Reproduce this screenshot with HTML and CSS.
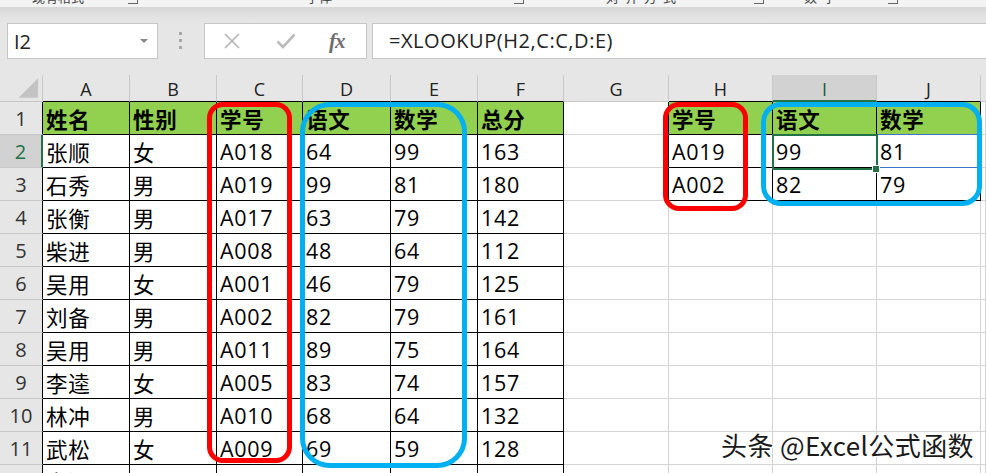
FILE: index.html
```html
<!DOCTYPE html>
<html lang="zh-CN">
<head>
<meta charset="utf-8">
<title>XLOOKUP</title>
<link rel="stylesheet" href="styles.css">
</head>
<body>
<div class="app">
  <div class="ribbon">
    <span class="rt t1">现有格式</span>
    <span class="lnch l1"></span>
    <span class="rt t2">字体</span>
    <span class="lnch l2"></span>
    <span class="rt t3">对齐方式</span>
    <span class="lnch l3"></span>
    <span class="rt t4">数字</span>
    <span class="lnch l4"></span>
  </div>
  <div class="fbar">
    <div class="namebox"><span class="ref">I2</span><span class="dd"></span></div>
    <div class="dots"><i></i><i></i><i></i></div>
    <div class="btns">
      <svg class="ico cancel" width="18" height="18" viewBox="0 0 18 18"><path d="M2 2 L16 16 M16 2 L2 16" stroke="#b4b4b4" stroke-width="1.6" fill="none"/></svg>
      <svg class="ico ok" width="20" height="18" viewBox="0 0 20 18"><path d="M1.5 9.5 L7 15 L18.5 2.5" stroke="#bcbcbc" stroke-width="2.6" fill="none"/></svg>
      <span class="fx">fx</span>
    </div>
    <div class="finput">=XLOOKUP(H2,C:C,D:E)</div>
  </div>
  <div class="sheet">
    <!-- column headers -->
    <div class="corner"><svg width="43" height="27" viewBox="0 0 43 27"><path d="M39 3 L39 23 L19 23 Z" fill="#c3c3c3"/></svg></div>
    <div class="ch bb">A</div><div class="ch bb">B</div><div class="ch bb">C</div><div class="ch bb">D</div><div class="ch bb">E</div><div class="ch bb">F</div><div class="ch">G</div><div class="ch bb">H</div><div class="ch bb sel">I</div><div class="ch bb">J</div><div class="ch end"></div>
    <!-- row 1 -->
    <div class="rh">1</div>
    <div class="c t g b">姓名</div><div class="c t g b">性别</div><div class="c t g b">学号</div><div class="c t g b">语文</div><div class="c t g b">数学</div><div class="c t g b">总分</div>
    <div class="c lb"></div><div class="c t g b">学号</div><div class="c t g b">语文</div><div class="c t g b jb">数学</div><div class="c"></div>
    <!-- row 2 -->
    <div class="rh sel">2</div>
    <div class="c t">张顺</div><div class="c t">女</div><div class="c t">A018</div><div class="c t">64</div><div class="c t">99</div><div class="c t">163</div>
    <div class="c lb"></div><div class="c t">A019</div><div class="c t">99</div><div class="c t jb">81</div><div class="c"></div>
    <!-- row 3 -->
    <div class="rh">3</div>
    <div class="c t">石秀</div><div class="c t">男</div><div class="c t">A019</div><div class="c t">99</div><div class="c t">81</div><div class="c t">180</div>
    <div class="c lb"></div><div class="c t">A002</div><div class="c t">82</div><div class="c t">79</div><div class="c"></div>
    <!-- row 4 -->
    <div class="rh">4</div>
    <div class="c t">张衡</div><div class="c t">男</div><div class="c t">A017</div><div class="c t">63</div><div class="c t">79</div><div class="c t">142</div>
    <div class="c"></div><div class="c"></div><div class="c"></div><div class="c"></div><div class="c"></div>
    <!-- row 5 -->
    <div class="rh">5</div>
    <div class="c t">柴进</div><div class="c t">男</div><div class="c t">A008</div><div class="c t">48</div><div class="c t">64</div><div class="c t">112</div>
    <div class="c"></div><div class="c"></div><div class="c"></div><div class="c"></div><div class="c"></div>
    <!-- row 6 -->
    <div class="rh">6</div>
    <div class="c t">吴用</div><div class="c t">女</div><div class="c t">A001</div><div class="c t">46</div><div class="c t">79</div><div class="c t">125</div>
    <div class="c"></div><div class="c"></div><div class="c"></div><div class="c"></div><div class="c"></div>
    <!-- row 7 -->
    <div class="rh">7</div>
    <div class="c t">刘备</div><div class="c t">男</div><div class="c t">A002</div><div class="c t">82</div><div class="c t">79</div><div class="c t">161</div>
    <div class="c"></div><div class="c"></div><div class="c"></div><div class="c"></div><div class="c"></div>
    <!-- row 8 -->
    <div class="rh">8</div>
    <div class="c t">吴用</div><div class="c t">男</div><div class="c t">A011</div><div class="c t">89</div><div class="c t">75</div><div class="c t">164</div>
    <div class="c"></div><div class="c"></div><div class="c"></div><div class="c"></div><div class="c"></div>
    <!-- row 9 -->
    <div class="rh">9</div>
    <div class="c t">李逵</div><div class="c t">女</div><div class="c t">A005</div><div class="c t">83</div><div class="c t">74</div><div class="c t">157</div>
    <div class="c"></div><div class="c"></div><div class="c"></div><div class="c"></div><div class="c"></div>
    <!-- row 10 -->
    <div class="rh">10</div>
    <div class="c t">林冲</div><div class="c t">男</div><div class="c t">A010</div><div class="c t">68</div><div class="c t">64</div><div class="c t">132</div>
    <div class="c"></div><div class="c"></div><div class="c"></div><div class="c"></div><div class="c"></div>
    <!-- row 11 -->
    <div class="rh">11</div>
    <div class="c t">武松</div><div class="c t">女</div><div class="c t">A009</div><div class="c t">69</div><div class="c t">59</div><div class="c t">128</div>
    <div class="c"></div><div class="c"></div><div class="c"></div><div class="c"></div><div class="c"></div>
    <!-- row 12 -->
    <div class="rh">12</div>
    <div class="c t">宋江</div><div class="c t">男</div><div class="c t">A012</div><div class="c t">77</div><div class="c t">85</div><div class="c t">162</div>
    <div class="c"></div><div class="c"></div><div class="c"></div><div class="c"></div><div class="c"></div>
  </div>

  <div class="sel-cell"><span class="handle"></span></div>
  <div class="ring red ring-c"></div>
  <div class="ring blue ring-de"></div>
  <div class="ring red ring-h"></div>
  <div class="ring blue ring-ij"></div>
  <div class="mark">头条 @Excel公式函数</div>
</div>
</body>
</html>
```
FILE: styles.css
```css
html, body {
  margin: 0;
  padding: 0;
  background: #ffffff;
}
body {
  width: 986px;
  height: 473px;
  overflow: hidden;
  font-family: "Open Sans", "Noto Sans CJK SC", sans-serif;
  color: #000;
}
.app {
  position: relative;
  width: 986px;
  height: 473px;
  overflow: hidden;
}

/* ribbon remnant */
.ribbon {
  height: 7px;
  background: #f3f3f3;
  overflow: hidden;
  display: flex;
  align-items: flex-start;
  color: #444;
  font-family: "Noto Sans CJK SC", sans-serif;
  font-size: 13px;
  line-height: 13px;
}
.rt { display: block; margin-top: -10px; white-space: nowrap; }
.lnch {
  display: block;
  width: 9px;
  height: 9px;
  margin-top: -6px;
  border-right: 1px solid #666;
  border-bottom: 1px solid #666;
  flex-shrink: 0;
}
.t1 { margin-left: 32px; }
.l1 { margin-left: 44px; }
.t2 { margin-left: 168px; }
.l2 { margin-left: 182px; }
.t3 { margin-left: 82px; letter-spacing: 6px; }
.l3 { margin-left: 72px; }
.t4 { margin-left: 40px; letter-spacing: 6px; }
.l4 { margin-left: 46px; }

/* formula bar */
.fbar {
  height: 68px;
  box-sizing: border-box;
  padding-top: 16px;
  display: flex;
  align-items: flex-start;
  background: linear-gradient(#d6d6d6 0px, #e1e1e1 8px, #e6e6e6 16px);
  background-color: #e6e6e6;
}
.namebox {
  margin-left: 7px;
  width: 151px;
  height: 36px;
  box-sizing: border-box;
  border: 1px solid #c6c6c6;
  background: #fff;
  display: flex;
  align-items: center;
  padding-left: 6px;
  font-size: 20px;
  color: #222;
  flex-shrink: 0;
}
.dd {
  margin-left: auto;
  margin-right: 9px;
  width: 0;
  height: 0;
  border-left: 4px solid transparent;
  border-right: 4px solid transparent;
  border-top: 4px solid #8a8a8a;
}
.dots {
  margin-left: 20px;
  width: 5px;
  height: 36px;
  display: flex;
  flex-direction: column;
  align-items: center;
  padding-top: 9px;
  box-sizing: border-box;
  gap: 4px;
  flex-shrink: 0;
}
.dots i {
  display: block;
  width: 3px;
  height: 3px;
  background: #a8a8a8;
}
.btns {
  margin-left: 21px;
  width: 163px;
  height: 36px;
  box-sizing: border-box;
  border: 1px solid #c6c6c6;
  background: #fff;
  display: flex;
  align-items: center;
  flex-shrink: 0;
}
.cancel { margin-left: 18px; }
.ok { margin-left: 35px; }
.fx {
  margin-left: 33px;
  font-family: "Liberation Serif", serif;
  font-style: italic;
  font-weight: bold;
  font-size: 21px;
  color: #6e6e6e;
  letter-spacing: -1px;
}
.finput {
  margin-left: 5px;
  width: 700px;
  height: 36px;
  box-sizing: border-box;
  border: 1px solid #c6c6c6;
  background: #fff;
  flex-shrink: 0;
  padding-left: 16px;
  font-size: 20px;
  letter-spacing: 0.55px;
  line-height: 33px;
  color: #222;
  white-space: nowrap;
}

/* sheet grid */
.sheet {
  display: grid;
  grid-template-columns: 43px 87px 87px 86px 88px 87px 86px 105px 104px 104px 104px 1fr;
  grid-template-rows: 27px;
  grid-auto-rows: 33px;
  background: #fff;
}
.corner {
  background: #e6e6e6;
  border-right: 1px solid #c8c8c8;
  border-bottom: 1px solid #c8c8c8;
  box-sizing: border-box;
  display: flex;
}
.ch {
  background: #e6e6e6;
  border-right: 1px solid #c8c8c8;
  border-bottom: 1px solid #c8c8c8;
  box-sizing: border-box;
  display: flex;
  align-items: center;
  justify-content: center;
  font-size: 18px;
  color: #222;
  padding-top: 2px;
}
.ch.bb { border-bottom-color: #000; }
.ch.sel {
  background: #d2d2d2;
  border-bottom: 2px solid #217346;
  color: #1d5c38;
}
.ch.end { border-right: none; }
.rh {
  background: #e6e6e6;
  border-right: 1px solid #000;
  border-bottom: 1px solid #c8c8c8;
  box-sizing: border-box;
  display: flex;
  align-items: center;
  justify-content: center;
  font-size: 20px;
  color: #333;
}
.rh.sel {
  background: #d2d2d2;
  border-right: 2px solid #217346;
  color: #217346;
}
.c {
  border-right: 1px solid #d4d4d4;
  border-bottom: 1px solid #d4d4d4;
  box-sizing: border-box;
  display: flex;
  align-items: center;
  padding-left: 3px;
  font-size: 21.5px;
  letter-spacing: 0.7px;
  white-space: nowrap;
  overflow: hidden;
}
.c.t { border-right-color: #000; border-bottom-color: #000; }
.c.lb { border-right-color: #000; }
.c.g { background: #92d050; }
.c.b { font-weight: 700; }
.c.jb { border-bottom-color: #3a74c9; }

/* overlays */
.sel-cell {
  position: absolute;
  left: 772px;
  top: 134px;
  width: 106px;
  height: 36px;
  box-sizing: border-box;
  border: 2px solid #217346;
}
.handle {
  position: absolute;
  right: -4px;
  bottom: -5px;
  width: 6px;
  height: 6px;
  background: #217346;
  border: 1px solid #fff;
}
.ring {
  position: absolute;
  box-sizing: border-box;
  border-style: solid;
  border-width: 5px;
}
.red { border-color: #ff0000; }
.blue { border-color: #00b0f0; }
.ring-c { left: 207px; top: 102px; width: 85px; height: 361px; border-radius: 16px; }
.ring-de { left: 300px; top: 102px; width: 167px; height: 366px; border-radius: 30px; }
.ring-h { left: 663px; top: 102px; width: 85px; height: 109px; border-radius: 16px; }
.ring-ij { left: 761px; top: 102px; width: 221px; height: 104px; border-radius: 20px; }
.mark {
  position: absolute;
  left: 721px;
  top: 428px;
  font-family: "Noto Sans CJK SC", sans-serif;
  font-size: 26px;
  letter-spacing: 0.4px;
  line-height: 34px;
  color: #1a1a1a;
  white-space: nowrap;
  text-shadow: 1px 1px 0 #fff, -1px -1px 0 #fff, 1px -1px 0 #fff, -1px 1px 0 #fff;
}
```
